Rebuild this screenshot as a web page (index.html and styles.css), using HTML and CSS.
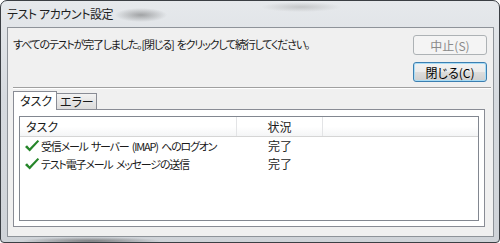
FILE: index.html
```html
<!DOCTYPE html>
<html lang="ja">
<head>
<meta charset="UTF-8" />
<title>テスト アカウント設定</title>
<link rel="stylesheet" href="styles.css">
</head>
<body>
  <div class="window">
    <div class="titlebar">テスト アカウント設定</div>
    <div class="client">
      <div class="top-row">
        <p class="message">すべてのテストが完了しました。[閉じる] をクリックして続行してください。</p>
        <div class="actions">
          <button class="btn" disabled>中止(S)</button>
          <button class="btn btn-default">閉じる(C)</button>
        </div>
      </div>
      <hr class="sep">
      <div class="tab-strip">
        <span class="tab active">タスク</span>
        <span class="tab">エラー</span>
      </div>
      <div class="tab-panel">
        <div class="listview">
          <div class="lv-head">
            <span class="col-task">タスク</span>
            <span class="col-status">状況</span>
            <span class="col-rest"></span>
          </div>
          <div class="lv-row">
            <span class="col-task">
              <svg class="check" width="16" height="14" viewBox="0 0 16 14"><path d="M1 8 L3 6.3 L5.6 9.2 L13.6 1 L15.2 2.3 L5.7 12.6 Z" fill="#26862a"/></svg>
              受信メール サーバー (IMAP) へのログオン
            </span>
            <span class="col-status">完了</span>
          </div>
          <div class="lv-row">
            <span class="col-task">
              <svg class="check" width="16" height="14" viewBox="0 0 16 14"><path d="M1 8 L3 6.3 L5.6 9.2 L13.6 1 L15.2 2.3 L5.7 12.6 Z" fill="#26862a"/></svg>
              テスト電子メール メッセージの送信
            </span>
            <span class="col-status">完了</span>
          </div>
        </div>
      </div>
    </div>
  </div>
</body>
</html>
```

FILE: styles.css
```css
body {
  margin: 0;
  font-family: "Noto Sans CJK JP", "Noto Sans", sans-serif;
  font-size: 12px;
  font-feature-settings: "palt";
  color: #1a1a1a;
}
.window {
  width: 500px;
  height: 243px;
  box-sizing: border-box;
  border: 1px solid #3b3f44;
  border-radius: 7px 7px 4px 4px;
  display: flex;
  flex-direction: column;
  background:
    radial-gradient(ellipse 26px 7px at 140px 14px, rgba(60,60,60,0.4), transparent),
    radial-gradient(ellipse 40px 5px at 300px 6px, rgba(120,120,120,0.3), transparent),
    radial-gradient(ellipse 70px 4px at 90px 240px, rgba(40,40,40,0.5), transparent),
    linear-gradient(#e6e9ec, #d6dadf 40%, #cfd3d8);
}
.titlebar {
  height: 26px;
  padding-left: 6px;
  line-height: 25px;
  letter-spacing: -0.4px;
  color: #1e1e1e;
}
.client {
  flex: 1;
  margin: 0 5px 5px 6px;
  border: 1px solid #8e9399;
  background: #f0f0f0;
  display: flex;
  flex-direction: column;
  padding: 7px 6px 9px 5px;
  min-height: 0;
}
.top-row {
  display: flex;
  justify-content: space-between;
}
.message {
  margin: 0;
  font-size: 11px;
  line-height: 18px;
  letter-spacing: -1.2px;
  word-spacing: 2px;
}
.actions {
  display: flex;
  flex-direction: column;
  gap: 7px;
}
.btn {
  width: 74px;
  height: 20px;
  box-sizing: border-box;
  padding: 0;
  font: inherit;
  line-height: 17px;
  color: #000;
  border: 1px solid #707070;
  border-radius: 3px;
  background: linear-gradient(#f2f2f2, #ebebeb 50%, #dddddd 50%, #cfcfcf);
}
.btn:disabled {
  color: #8a8a8a;
  border-color: #adb2b5;
  background: #f4f4f4;
}
.btn-default {
  border-color: #3c7fb1;
  box-shadow: inset 0 0 0 1px #a9dcf5;
}
.sep {
  border: 0;
  border-top: 1px solid #a0a0a0;
  border-bottom: 1px solid #fff;
  height: 0;
  margin: 5px -4px 0 0;
}
.tab-strip {
  display: flex;
  align-items: flex-end;
  height: 18px;
  margin-top: 2px;
}
.tab {
  box-sizing: border-box;
  height: 16px;
  width: 40px;
  padding-left: 3px;
  line-height: 15px;
  border: 1px solid #898c95;
  border-left: none;
  border-bottom: none;
  background: linear-gradient(#f3f3f3, #e6e6e6 50%, #dcdcdc);
}
.tab.active {
  height: 19px;
  width: 44px;
  margin-bottom: -1px;
  padding-left: 6px;
  line-height: 17px;
  border-left: 1px solid #898c95;
  background: #fff;
  position: relative;
  z-index: 1;
}
.tab-panel {
  flex: 1;
  margin-right: 2px;
  border: 1px solid #898c95;
  background: #fff;
  padding: 6px 5px 5px 5px;
  display: flex;
}
.listview {
  flex: 1;
  border: 1px solid #828790;
  background: #fff;
}
.lv-head {
  display: flex;
  height: 19px;
  border-bottom: 1px solid #d5d5d5;
  background: linear-gradient(#fff, #fff 50%, #f4f5f6);
  line-height: 19px;
}
.lv-head span {
  border-right: 1px solid #e3e4e6;
}
.col-task {
  width: 217px;
  box-sizing: border-box;
  padding-left: 6px;
  flex-shrink: 0;
}
.col-status {
  width: 86px;
  box-sizing: border-box;
  text-align: center;
  flex-shrink: 0;
}
.lv-head .col-rest {
  flex: 1;
  border-right: none;
}
.lv-row {
  display: flex;
  height: 18px;
  line-height: 18px;
}
.lv-row .col-task {
  padding-left: 4px;
  display: flex;
  align-items: center;
  gap: 1px;
  font-size: 11px;
  letter-spacing: -1.2px;
  word-spacing: 2px;
  white-space: nowrap;
}
.check {
  flex-shrink: 0;
}
```
